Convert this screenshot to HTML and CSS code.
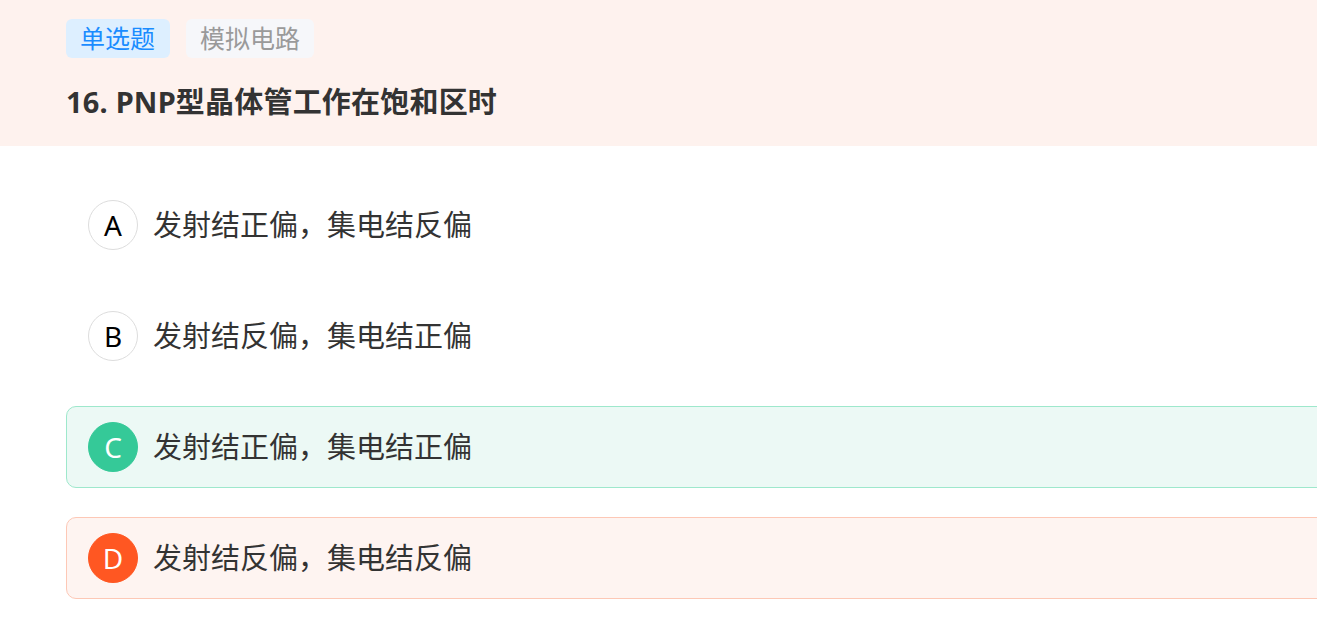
FILE: index.html
```html
<!DOCTYPE html>
<html lang="zh-CN">
<head>
<meta charset="utf-8">
<link rel="stylesheet" href="styles.css">
</head>
<body>
<div class="header">
  <div class="tags">
    <span class="tag tag-type">单选题</span>
    <span class="tag tag-subject">模拟电路</span>
  </div>
  <h1 class="title">16. PNP型晶体管工作在饱和区时</h1>
</div>
<div class="options">
  <div class="option">
    <span class="letter">A</span>
    <span class="text">发射结正偏，集电结反偏</span>
  </div>
  <div class="option">
    <span class="letter">B</span>
    <span class="text">发射结反偏，集电结正偏</span>
  </div>
  <div class="option correct">
    <span class="letter">C</span>
    <span class="text">发射结正偏，集电结正偏</span>
  </div>
  <div class="option wrong">
    <span class="letter">D</span>
    <span class="text">发射结反偏，集电结反偏</span>
  </div>
</div>
</body>
</html>
```
FILE: styles.css
```css
html, body {
  margin: 0;
  padding: 0;
  background: #ffffff;
  overflow: hidden;
  font-family: "Noto Sans", "Noto Sans CJK SC", sans-serif;
}

.header {
  background: #fef2ee;
  height: 146px;
  box-sizing: border-box;
  padding: 19px 0 0 66px;
}

.tags {
  display: flex;
  gap: 16px;
}

.tag {
  height: 39px;
  line-height: 39px;
  padding: 0 14px;
  border-radius: 6px;
  font-size: 25px;
}

.tag-type {
  background: #ddefff;
  color: #1a8cff;
  padding-right: 15px;
}

.tag-subject {
  background: #f6f7fa;
  color: #9a9a9a;
}

.title {
  margin: 24px 0 0 0;
  font-size: 29px;
  line-height: 40px;
  font-weight: 700;
  color: #333333;
  letter-spacing: 0.2px;
}

.options {
  padding: 38px 0 0 66px;
  display: flex;
  flex-direction: column;
  gap: 29px;
}

.option {
  height: 82px;
  box-sizing: border-box;
  margin-right: -30px;
  border: 1px solid transparent;
  border-radius: 10px;
  padding-left: 21px;
  display: flex;
  align-items: center;
  gap: 15px;
}

.letter {
  width: 50px;
  height: 50px;
  box-sizing: border-box;
  border-radius: 50%;
  border: 1px solid #dddddd;
  display: flex;
  align-items: center;
  justify-content: center;
  font-size: 28px;
  color: #000000;
  flex-shrink: 0;
}

.text {
  font-size: 29px;
  color: #333333;
  line-height: 40px;
}

.correct {
  background: #ecf9f5;
  border-color: #9ee8cc;
}

.correct .letter {
  background: #35c998;
  border-color: #35c998;
  color: #ffffff;
}

.wrong {
  background: #fef4f1;
  border-color: #fdc8b6;
}

.wrong .letter {
  background: #ff5722;
  border-color: #ff5722;
  color: #ffffff;
}
```
